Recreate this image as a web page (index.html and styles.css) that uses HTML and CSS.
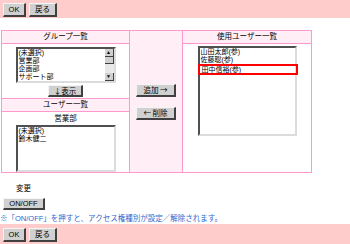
FILE: index.html
```html
<!DOCTYPE html>
<html lang="ja">
<head>
    <meta charset="UTF-8">
    <title>使用ユーザー設定</title>
    <link rel="stylesheet" href="styles.css">
</head>
<body>
    <div class="bar">
        <button class="btn btn-ok">OK</button>
        <button class="btn btn-back">戻る</button>
    </div>

    <div class="panel">
        <div class="col-left">
            <div class="head">グループ一覧</div>
            <div class="body body-group">
                <div class="listbox list-group">
                    <div class="items">
                        <div>(未選択)</div>
                        <div>営業部</div>
                        <div>企画部</div>
                        <div>サポート部</div>
                    </div>
                    <div class="scroll">
                        <div class="arrow">▲</div>
                        <div class="thumb"></div>
                        <div class="track"></div>
                        <div class="arrow">▼</div>
                    </div>
                </div>
                <button class="btn btn-show">↓表示</button>
            </div>
            <div class="head">ユーザー一覧</div>
            <div class="body body-user">
                <div class="group-name">営業部</div>
                <div class="listbox list-user">
                    <div class="items">
                        <div>(未選択)</div>
                        <div>鈴木健二</div>
                    </div>
                </div>
            </div>
        </div>

        <div class="col-mid">
            <button class="btn btn-move">追加 →</button>
            <button class="btn btn-move">← 削除</button>
        </div>

        <div class="col-right">
            <div class="head">使用ユーザー一覧</div>
            <div class="body body-used">
                <div class="listbox list-used">
                    <div class="items">
                        <div>山田太郎(参)</div>
                        <div>佐藤聡(参)</div>
                        <div class="picked">田中信裕(参)</div>
                    </div>
                </div>
            </div>
        </div>
    </div>

    <div class="change">
        <div class="change-label">変更</div>
        <button class="btn btn-onoff">ON/OFF</button>
    </div>
    <p class="note">※「ON/OFF」を押すと、アクセス権種別が設定／解除されます。</p>

    <div class="bar bar-bottom">
        <button class="btn btn-ok">OK</button>
        <button class="btn btn-back">戻る</button>
    </div>
</body>
</html>
```

FILE: styles.css
```css
body {
    margin: 0;
    font-family: "Liberation Sans", "Noto Sans CJK JP", sans-serif;
    font-size: 7.5px;
    color: #000;
    background-color: #fff;
}

/* barres du haut et du bas */
.bar {
    background-color: #ffcccc;
    height: 18px;
    display: flex;
    align-items: flex-start;
    gap: 3px;
    padding: 3px 0 0 3px;
    box-sizing: border-box;
}

.bar-bottom {
    margin-top: 1px;
    height: 21px;
    padding-top: 4px;
}

.btn {
    font-family: inherit;
    font-size: 7.5px;
    line-height: 1;
    color: #000;
    background-color: #d0d0d0;
    border-style: solid;
    border-width: 1px 2px 2px 1px;
    border-color: #f4f4f4 #404040 #404040 #f4f4f4;
    padding: 0;
    margin: 0;
    cursor: pointer;
    box-sizing: border-box;
}

.btn-ok {
    width: 23px;
    height: 14px;
}

.btn-back {
    width: 28px;
    height: 14px;
}

/* tableau principal */
.panel {
    margin: 12px 0 0 1px;
    width: 311px;
    height: 143px;
    display: grid;
    grid-template-columns: 127px 52px 128px;
    gap: 1px;
    padding: 1px;
    box-sizing: border-box;
    background-color: #ff99cc;
}

.col-left {
    display: grid;
    grid-template-rows: 12px 54px 12px 1fr;
    gap: 1px;
    background-color: #ff99cc;
}

.col-right {
    display: grid;
    grid-template-rows: 12px 1fr;
    gap: 1px;
    background-color: #ff99cc;
}

.head {
    background-color: #ffeef5;
    text-align: center;
    line-height: 12px;
}

.body {
    background-color: #fff;
    display: flex;
    flex-direction: column;
    align-items: center;
}

.body-group {
    padding-top: 3px;
}

.body-user {
    padding-top: 2px;
}

.body-used {
    padding-top: 2px;
}

.col-mid {
    background-color: #ffeef5;
    display: flex;
    flex-direction: column;
    align-items: center;
    justify-content: center;
    gap: 10px;
}

.btn-move {
    font-family: "Noto Sans CJK JP", sans-serif;
    width: 40px;
    height: 13px;
}

.btn-show {
    font-family: "Noto Sans CJK JP", sans-serif;
    margin-top: 2px;
    width: 35px;
    height: 12px;
}

/* listes */
.listbox {
    background-color: #fff;
    border-style: solid;
    border-width: 2px;
    border-color: #505050 #dcdcdc #dcdcdc #505050;
    box-sizing: border-box;
    display: flex;
    overflow: hidden;
}

.items {
    flex: 1;
    padding-left: 1px;
    font-size: 7px;
    line-height: 8px;
    white-space: nowrap;
}

.list-group {
    width: 100px;
    height: 36px;
}

.list-user {
    width: 100px;
    height: 47px;
    margin-top: 2px;
}

.list-used {
    width: 99px;
    height: 90px;
    overflow: visible;
}

.group-name {
    line-height: 9px;
}

.scroll {
    width: 9px;
    display: flex;
    flex-direction: column;
    background-color: #e8e8e8;
}

.arrow {
    height: 8px;
    font-size: 5px;
    line-height: 7px;
    text-align: center;
    background-color: #d0d0d0;
    border-style: solid;
    border-width: 0 1px 1px 0;
    border-color: #404040;
    box-sizing: border-box;
}

.thumb {
    height: 7px;
    background-color: #d0d0d0;
    border-style: solid;
    border-width: 0 1px 1px 0;
    border-color: #404040;
    box-sizing: border-box;
}

.track {
    flex: 1;
}

.picked {
    margin: 0 -3px;
    padding-left: 2px;
    border: 2px solid #ff0000;
    line-height: 7px;
}

/* partie basse */
.change {
    padding: 11px 0 0 3px;
}

.change-label {
    padding-left: 13px;
    line-height: 10px;
}

.btn-onoff {
    display: block;
    margin-top: 4px;
    width: 42px;
    height: 12px;
}

.note {
    margin: 4px 0 0 0;
    color: #3366cc;
    line-height: 9px;
    white-space: nowrap;
}
```
